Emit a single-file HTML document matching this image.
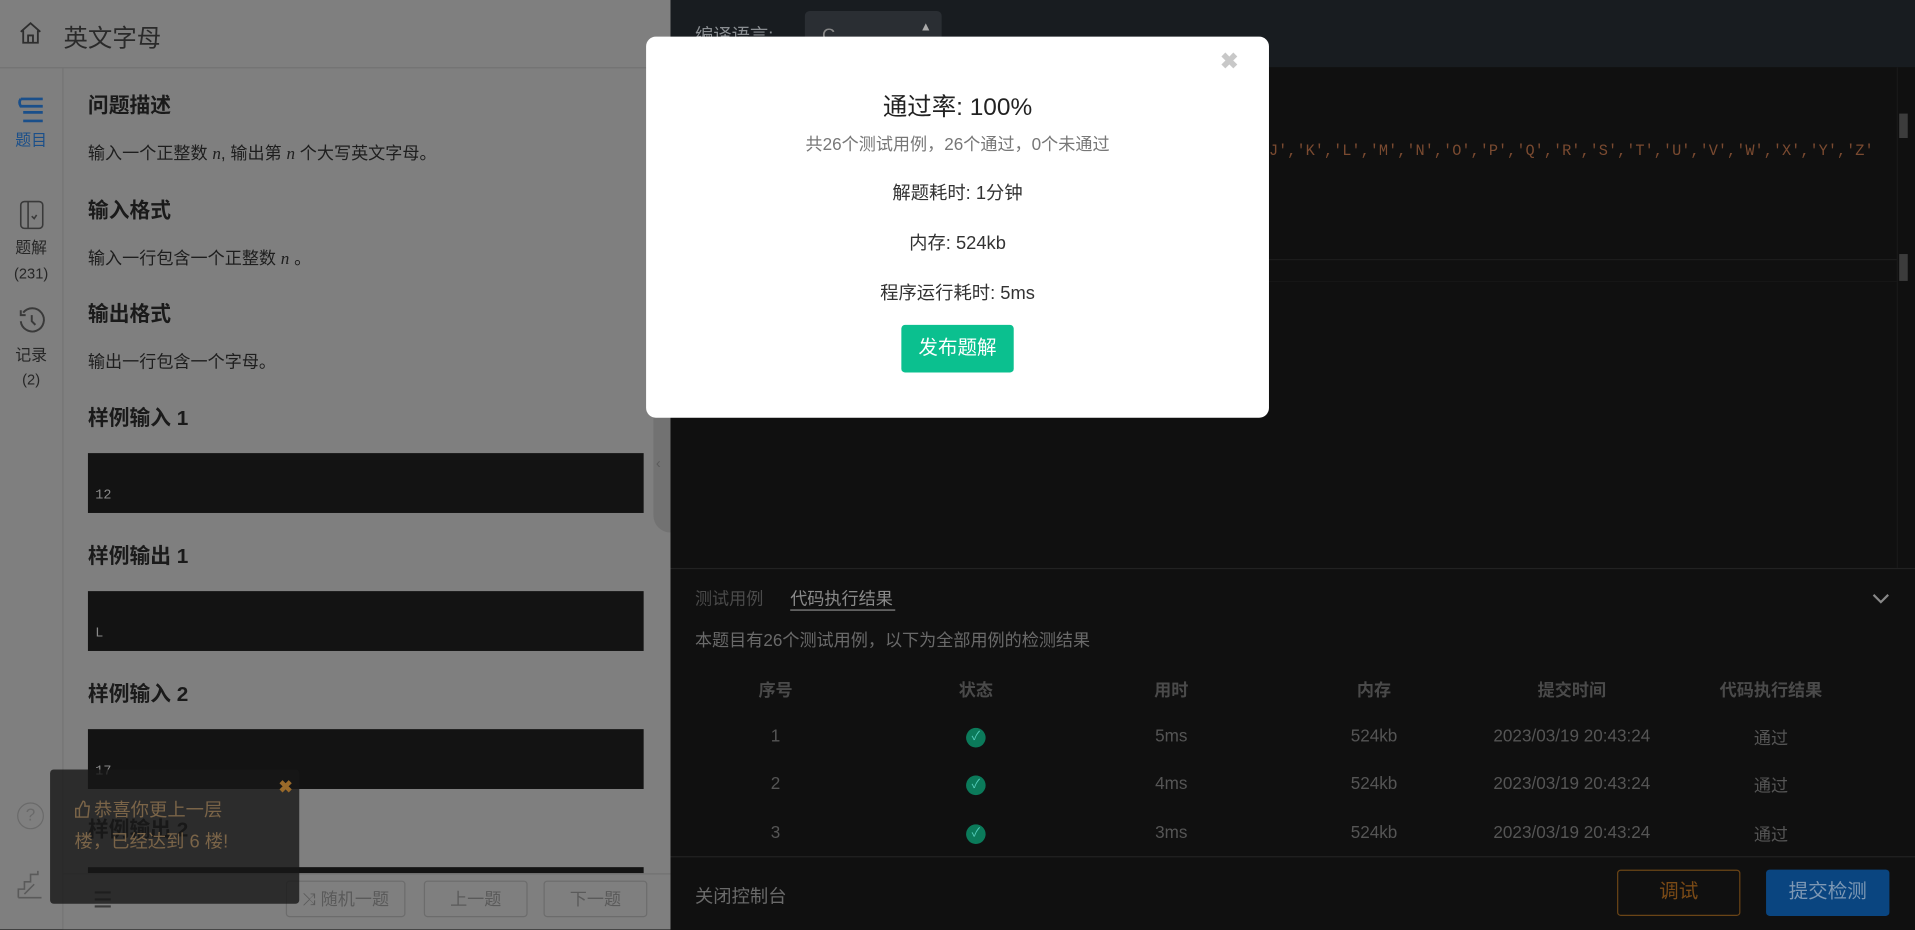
<!DOCTYPE html>
<html><head><meta charset="utf-8">
<style>
*{margin:0;padding:0;box-sizing:border-box}
html,body{width:1915px;height:930px;overflow:hidden;background:#101010}
#w{position:absolute;left:0;top:0;width:1568px;height:761px;transform:scale(1.22134);transform-origin:0 0;font-family:"Liberation Sans","Noto Sans CJK SC",sans-serif;overflow:hidden}
.a{position:absolute;white-space:nowrap}
#left{position:absolute;left:0;top:0;width:549px;height:761px;background:#7f7f7f}
#right{position:absolute;left:549px;top:0;width:1019px;height:761px;background:#101010}
h3{position:absolute;left:72px;font-size:17px;color:#1a1a1a;font-weight:bold;line-height:20px}
.p{position:absolute;left:72px;font-size:14px;color:#1e1e1e;line-height:18px}
.box{position:absolute;left:72px;width:455px;height:49px;background:#131313;color:#8a8a8a;font-family:"Liberation Mono",monospace;font-size:11px;padding:29px 0 0 6px}
.btn{position:absolute;top:721px;height:30px;border:1px solid #6c6c6c;border-radius:3px;color:#5a5a5a;font-size:14px;text-align:center;line-height:28px}
.side{position:absolute;width:51px;text-align:center;font-size:12px;color:#262626}
.th{position:absolute;top:555px;font-size:14px;font-weight:bold;color:#4a4a4a;width:160px;text-align:center;margin-left:-80px}
.td{position:absolute;font-size:14px;color:#555;width:200px;text-align:center;margin-left:-100px}
.ck{position:absolute;width:16px;height:16px;border-radius:50%;background:#0b7a5a;margin-left:-8px;color:#5cb;font-size:10px;text-align:center;line-height:16px}
</style></head><body><div id="w">
<div id="left">
 <div class="a" style="left:0;top:55px;width:549px;height:1px;background:#727272"></div>
 <div class="a" style="left:51px;top:56px;width:1px;height:705px;background:#747474"></div>
 <svg class="a" style="left:15px;top:17px" width="20" height="20" viewBox="0 0 20 20" fill="none" stroke="#2e2e2e" stroke-width="1.5"><path d="M2 9 L10 2 L18 9 M4 8 V18 H16 V8 M8 18 V12 H12 V18"/></svg>
 <div class="a" style="left:52px;top:15px;font-size:20px;color:#2a2a2a">英文字母</div>
 <svg class="a" style="left:13px;top:79px" width="26" height="22" viewBox="0 0 26 22" fill="none" stroke="#1a4f8a" stroke-width="2.2"><path d="M4 2 H22 M4 2 Q2 5 4 8 H22 M6 13 H22 M6 20 H22"/></svg>
 <div class="side" style="top:104px;color:#1a4f8a;font-size:13px">题目</div>
 <svg class="a" style="left:15px;top:164px" width="22" height="24" viewBox="0 0 22 24" fill="none" stroke="#3a3a3a" stroke-width="1.3"><rect x="2" y="1" width="18" height="22" rx="3"/><path d="M8 1 V23 M11 13 L13 15 L15 12"/></svg>
 <div class="side" style="top:192px;font-size:13px">题解</div>
 <div class="side" style="top:217px">(231)</div>
 <svg class="a" style="left:14px;top:251px" width="24" height="24" viewBox="0 0 24 24" fill="none" stroke="#3a3a3a" stroke-width="1.6"><path d="M5 5 A9.5 9.5 0 1 1 3 12 M3 3 V7 H7 M12 7 V12 L15 15"/></svg>
 <div class="side" style="top:280px;font-size:13px">记录</div>
 <div class="side" style="top:304px">(2)</div>
 <div class="a" style="left:14px;top:657px;width:22px;height:22px;border:1.5px solid #6a6a6a;border-radius:50%;color:#6a6a6a;font-size:14px;text-align:center;line-height:19px">?</div>
 <svg class="a" style="left:14px;top:712px" width="22" height="24" viewBox="0 0 22 24" fill="none" stroke="#5a5a5a" stroke-width="1.3"><path d="M1 23 V16 H6 V10 H11 V4 H17 V1 M1 23 H20 M6 20 L14 12"/></svg>

 <h3 style="top:77px">问题描述</h3>
 <div class="p" style="top:116px">输入一个正整数 <i style="font-family:'Liberation Serif',serif">n</i>, 输出第 <i style="font-family:'Liberation Serif',serif">n</i> 个大写英文字母。</div>
 <h3 style="top:163px">输入格式</h3>
 <div class="p" style="top:202px">输入一行包含一个正整数 <i style="font-family:'Liberation Serif',serif">n</i> 。</div>
 <h3 style="top:248px">输出格式</h3>
 <div class="p" style="top:287px">输出一行包含一个字母。</div>
 <h3 style="top:333px">样例输入 1</h3>
 <div class="box" style="top:371px">12</div>
 <h3 style="top:446px">样例输出 1</h3>
 <div class="box" style="top:484px">L</div>
 <h3 style="top:559px">样例输入 2</h3>
 <div class="box" style="top:597px">17</div>
 <h3 style="top:670px">样例输出 2</h3>
 <div class="box" style="top:710px;height:5px;padding:0"></div>
 <div class="a" style="left:535px;top:56px;width:14px;height:380px;background:#727272;border-radius:0 0 0 14px"></div>
 <div class="a" style="left:537px;top:372px;font-size:12px;color:#5c5c5c">‹</div>
 <div class="a" style="left:52px;top:715px;width:497px;height:46px;background:#7f7f7f;border-top:1px solid #727272"></div>
 <div class="a" style="left:76px;top:727px;font-size:18px;color:#3a3a3a">☰</div>
 <div class="btn" style="left:234px;width:98px">⤨ 随机一题</div>
 <div class="btn" style="left:347px;width:85px">上一题</div>
 <div class="btn" style="left:445px;width:85px">下一题</div>
 <div class="a" style="left:41px;top:630px;width:204px;height:110px;background:rgba(24,24,24,0.8);border-radius:3px"></div>
 <div class="a" style="left:228px;top:636px;color:#9a6a2a;font-size:14px;font-weight:bold">✖</div>
 <svg class="a" style="left:61px;top:655px" width="13" height="15" viewBox="0 0 13 15" fill="none" stroke="#7a6448" stroke-width="1.2"><path d="M1 7 H4 V14 H1 Z M4 7 L7 1 Q9 1 8.5 5 H12 L11 14 H4"/></svg>
 <div class="a" style="left:77px;top:651px;color:#7a6448;font-size:15px;line-height:26px">恭喜你更上一层</div>
 <div class="a" style="left:61px;top:677px;color:#7a6448;font-size:15px;line-height:26px">楼，已经达到 6 楼!</div>
</div>

<div id="right">
 <div class="a" style="left:0;top:0;width:1019px;height:55px;background:#181c20"></div>
 <div class="a" style="left:20px;top:18px;font-size:15px;color:#8a8e92">编译语言:</div>
 <div class="a" style="left:110px;top:9px;width:112px;height:42px;background:#2a2e33;border-radius:4px;color:#888;font-size:15px;padding:12px 0 0 14px">C<span style="position:absolute;right:8px;top:8px;font-size:10px;color:#aaa">▲</span></div>
 <div class="a" style="left:490px;top:117px;font-family:'Liberation Mono',monospace;font-size:12.5px;color:#7a4a30">J','K','L','M','N','O','P','Q','R','S','T','U','V','W','X','Y','Z'</div>
 <div class="a" style="left:0;top:212px;width:1005px;height:1px;background:#1c1c1c"></div>
 <div class="a" style="left:0;top:230px;width:1005px;height:1px;background:#161616"></div>
 <div class="a" style="left:1006px;top:93px;width:7px;height:20px;background:#3c3c3c"></div>
 <div class="a" style="left:1006px;top:208px;width:7px;height:22px;background:#3c3c3c"></div>
 <div class="a" style="left:1004px;top:55px;width:1px;height:410px;background:#181818"></div>
 <div class="a" style="left:0;top:465px;width:1019px;height:1px;background:#222"></div>
 <div class="a" style="left:20px;top:480px;font-size:14px;color:#4a4a4a">测试用例</div>
 <div class="a" style="left:98px;top:480px;font-size:14px;color:#8a8a8a">代码执行结果</div>
 <div class="a" style="left:98px;top:499px;width:86px;height:1px;background:#888"></div>
 <svg class="a" style="left:984px;top:485px" width="14" height="10" viewBox="0 0 14 10" fill="none" stroke="#888" stroke-width="1.8"><path d="M1 2 L7 8 L13 2"/></svg>
 <div class="a" style="left:20px;top:514px;font-size:14px;color:#6a6a6a">本题目有26个测试用例，以下为全部用例的检测结果</div>
 <div class="th" style="left:86px">序号</div><div class="th" style="left:250px">状态</div><div class="th" style="left:410px">用时</div><div class="th" style="left:576px">内存</div><div class="th" style="left:738px">提交时间</div><div class="th" style="left:901px">代码执行结果</div>
 <div class="td" style="left:86px;top:594px">1</div><div class="ck" style="left:250px;top:596px">✓</div><div class="td" style="left:410px;top:594px">5ms</div><div class="td" style="left:576px;top:594px">524kb</div><div class="td" style="left:738px;top:594px">2023/03/19 20:43:24</div><div class="td" style="left:901px;top:594px">通过</div>
 <div class="td" style="left:86px;top:633px">2</div><div class="ck" style="left:250px;top:635px">✓</div><div class="td" style="left:410px;top:633px">4ms</div><div class="td" style="left:576px;top:633px">524kb</div><div class="td" style="left:738px;top:633px">2023/03/19 20:43:24</div><div class="td" style="left:901px;top:633px">通过</div>
 <div class="td" style="left:86px;top:673px">3</div><div class="ck" style="left:250px;top:675px">✓</div><div class="td" style="left:410px;top:673px">3ms</div><div class="td" style="left:576px;top:673px">524kb</div><div class="td" style="left:738px;top:673px">2023/03/19 20:43:24</div><div class="td" style="left:901px;top:673px">通过</div>
 <div class="a" style="left:0;top:701px;width:1019px;height:1px;background:#222"></div>
 <div class="a" style="left:20px;top:723px;font-size:15px;color:#6a6a6a">关闭控制台</div>
 <div class="a" style="left:775px;top:712px;width:101px;height:38px;border:1px solid #6a4416;border-radius:3px;color:#7a4a16;font-size:16px;text-align:center;line-height:36px">调试</div>
 <div class="a" style="left:897px;top:712px;width:101px;height:38px;background:#0a4580;border-radius:3px;color:#7d98b4;font-size:16px;text-align:center;line-height:38px">提交检测</div>
</div>

<div class="a" style="left:529px;top:30px;width:510px;height:312px;background:#fff;border-radius:8px">
 <div class="a" style="left:470px;top:10px;font-size:18px;color:#c8c8c8;font-weight:bold">✖</div>
 <div class="a" style="left:0;width:510px;text-align:center;top:41px;font-size:20px;color:#222">通过率: 100%</div>
 <div class="a" style="left:0;width:510px;text-align:center;top:78px;font-size:14px;color:#777">共26个测试用例，26个通过，0个未通过</div>
 <div class="a" style="left:0;width:510px;text-align:center;top:117px;font-size:15px;color:#333">解题耗时: 1分钟</div>
 <div class="a" style="left:0;width:510px;text-align:center;top:158px;font-size:15px;color:#333">内存: 524kb</div>
 <div class="a" style="left:0;width:510px;text-align:center;top:199px;font-size:15px;color:#333">程序运行耗时: 5ms</div>
 <div class="a" style="left:209px;top:236px;width:92px;height:39px;background:#0bc08f;border-radius:3px;color:#fff;font-size:16px;text-align:center;line-height:39px">发布题解</div>
</div>
</div></body></html>
